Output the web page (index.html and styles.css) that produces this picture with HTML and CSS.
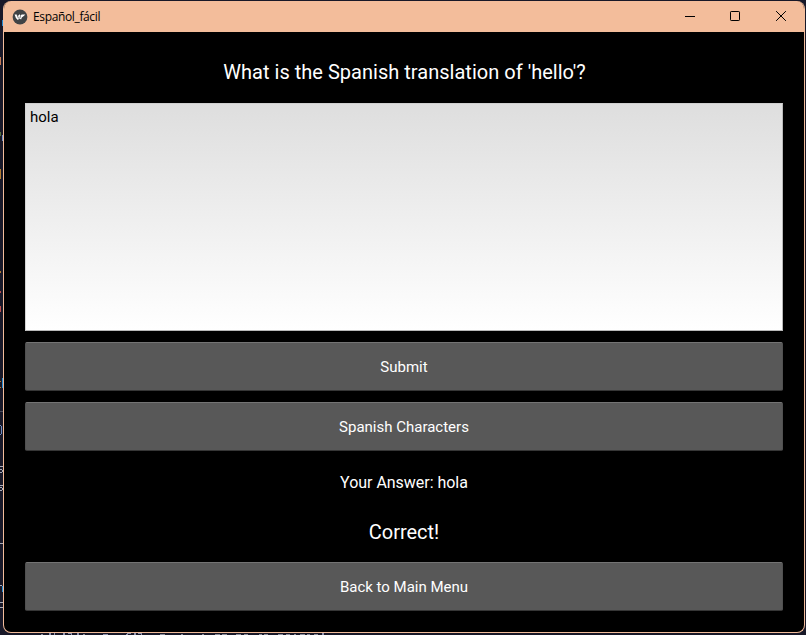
FILE: index.html
```html
<!DOCTYPE html>
<html lang="en">
<head>
<meta charset="utf-8">
<title>Español_fácil</title>
<link rel="stylesheet" href="styles.css">
</head>
<body>
<svg class="backdrop" width="806" height="635" viewBox="0 0 806 635" aria-hidden="true" shape-rendering="crispEdges">
  <path fill="#4b4c5b" d="M0 411h3v1H0z"/>
  <path fill="#a9abb8" d="M0 466h3v1H0zM0 469h2v1H0zM2 470h1v2H2zM0 472h2v1H0zM0 485h3v1H0zM0 487h2v1H0zM2 488h1v2H2zM0 490h2v1H0zM0 543h3v1H0zM0 585h2v1H0zM0 602h3v1H0zM0 607h3v1H0z"/>
  <path fill="#268bd2" d="M2 20h1v6H2zM2 378h1v10H2zM2 586h1v6H2z"/>
  <path fill="#718dc0" d="M2 135h1v6H2zM1 426h1v8H1zM0 425h1v1H0zM0 434h1v1H0z"/>
  <path fill="#53733e" d="M0 132h1v4H0z"/>
  <path fill="#b37b2e" d="M0 169h1v10H0zM0 271h1v2H0zM0 381h1v1H0zM0 387h1v1H0z"/>
  <path fill="#c77b53" d="M0 57h1v8H0z"/>
  <path fill="#bd4c4c" d="M0 291h1v2H0zM0 306h1v6H0z"/>
  <path fill="#8d92ad" d="M49 633h2v2H49zM54 633h1v2H54zM63 633h2v2H63zM68 633h4v1H68zM71 634h1v1H71zM77 633h2v2H77zM103 634h5v1H103zM126 634h2v1H126zM127 633h4v1H127zM134 633h2v2H134zM138 633h4v1H138zM141 634h1v1H141zM322 633h2v2H322z"/>
  <path fill="#8a8c99" d="M41 634h2v1H41zM83 634h2v1H83zM160 634h5v1H160zM181 634h2v1H181zM202 634h2v1H202zM215 634h5v1H215zM222 634h5v1H222zM236 634h5v1H236zM244 634h4v1H244zM259 634h3v1H259zM264 634h4v1H264zM278 634h5v1H278zM286 634h4v1H286zM294 634h2v1H294zM300 634h5v1H300zM307 634h3v1H307zM314 634h4v1H314z"/>
</svg>
<div class="window">
  <header class="titlebar">
    <svg class="logo" width="16" height="16" viewBox="0 0 16 16"><circle cx="8" cy="8" r="7.4" fill="#404345"/><path fill="#fff" d="M2.6 5.4h2.2l1 1.8L7.4 5.2l1.2 1.3 1.1-1 3.6-.1-1.5 1.7-2 1.5-.7 2-1.5-1.2-1.8 1.7L3.9 9z"/><path fill="none" stroke="#404345" stroke-width=".7" d="m5 5.6 1.5 3.8M8.6 6.3l-.7 2.9"/></svg>
    <span class="name">Español_fácil</span>
    <div class="controls">
      <svg width="46" height="31" viewBox="0 0 46 31"><path d="M18 15.5h10"/></svg>
      <svg width="46" height="31" viewBox="0 0 46 31"><rect x="17.5" y="10.5" width="9" height="9" rx=".7"/></svg>
      <svg width="46" height="31" viewBox="0 0 46 31"><path d="m17.1 10.1 9.8 9.8m0-9.8-9.8 9.8"/></svg>
    </div>
  </header>
  <main class="quiz">
    <h1 class="question">What is the Spanish translation of 'hello'?</h1>
    <div class="answer">hola</div>
    <button class="btn">Submit</button>
    <button class="btn">Spanish Characters</button>
    <p class="given">Your Answer: hola</p>
    <p class="result">Correct!</p>
    <button class="btn">Back to Main Menu</button>
  </main>
</div>
</body>
</html>
```
FILE: styles.css
```css
* { box-sizing: border-box; }
body {
  margin: 0;
  height: 635px;
  padding: 1px 1px 2px 3px;
  overflow: hidden;
  background: #181828;
  font-family: Roboto, "Liberation Sans", sans-serif;
}
.backdrop { position: absolute; left: 0; top: 0; }
.window {
  position: relative;
  width: 802px;
  height: 632px;
  border: 1px solid #f3bd9b;
  border-top: 0;
  border-radius: 8px;
  overflow: hidden;
  background: #000;
}
.titlebar {
  display: flex;
  align-items: center;
  height: 31px;
  padding-left: 8px;
  background: #f3bd9b;
  color: #000;
}
.logo { margin-right: 5px; }
.name {
  font: 12px/16px "Open Sans", "Noto Sans", sans-serif;
  letter-spacing: -0.36px;
}
.controls { display: flex; margin: 0 -1px 0 auto; }
.controls svg { fill: none; stroke: #000; stroke-width: 1; }
.quiz {
  display: flex;
  flex-direction: column;
  height: 600px;
  padding: 11px 21px 21px;
  color: #fff;
}
.question, .given, .result { margin: 0; text-align: center; font-weight: 400; }
.question { height: 60px; padding-left: 1px; font-size: 20px; line-height: 59px; letter-spacing: 0.02px; }
.answer {
  height: 228px;
  margin-bottom: 11px;
  padding: 4px;
  border: 1px solid #b9b9b9;
  border-top-color: #cfcfcf;
  border-left-color: #d5d5d5;
  background: linear-gradient(#dedede, #fff);
  color: #000;
  font-size: 15px;
  line-height: 18px;
}
.btn {
  height: 49px;
  margin: 0 0 11px;
  padding: 2px 0 0;
  border: 1px solid #505050;
  border-top-color: #747474;
  border-bottom-color: #363636;
  border-radius: 2px;
  background: #585858;
  color: #fff;
  font: 15px/45px Roboto, "Liberation Sans", sans-serif;
}
.given { height: 40px; font-size: 16px; line-height: 42px; letter-spacing: -0.03px; }
.result { height: 60px; font-size: 20px; line-height: 61px; }
.btn:last-child { margin-bottom: 0; }
```
